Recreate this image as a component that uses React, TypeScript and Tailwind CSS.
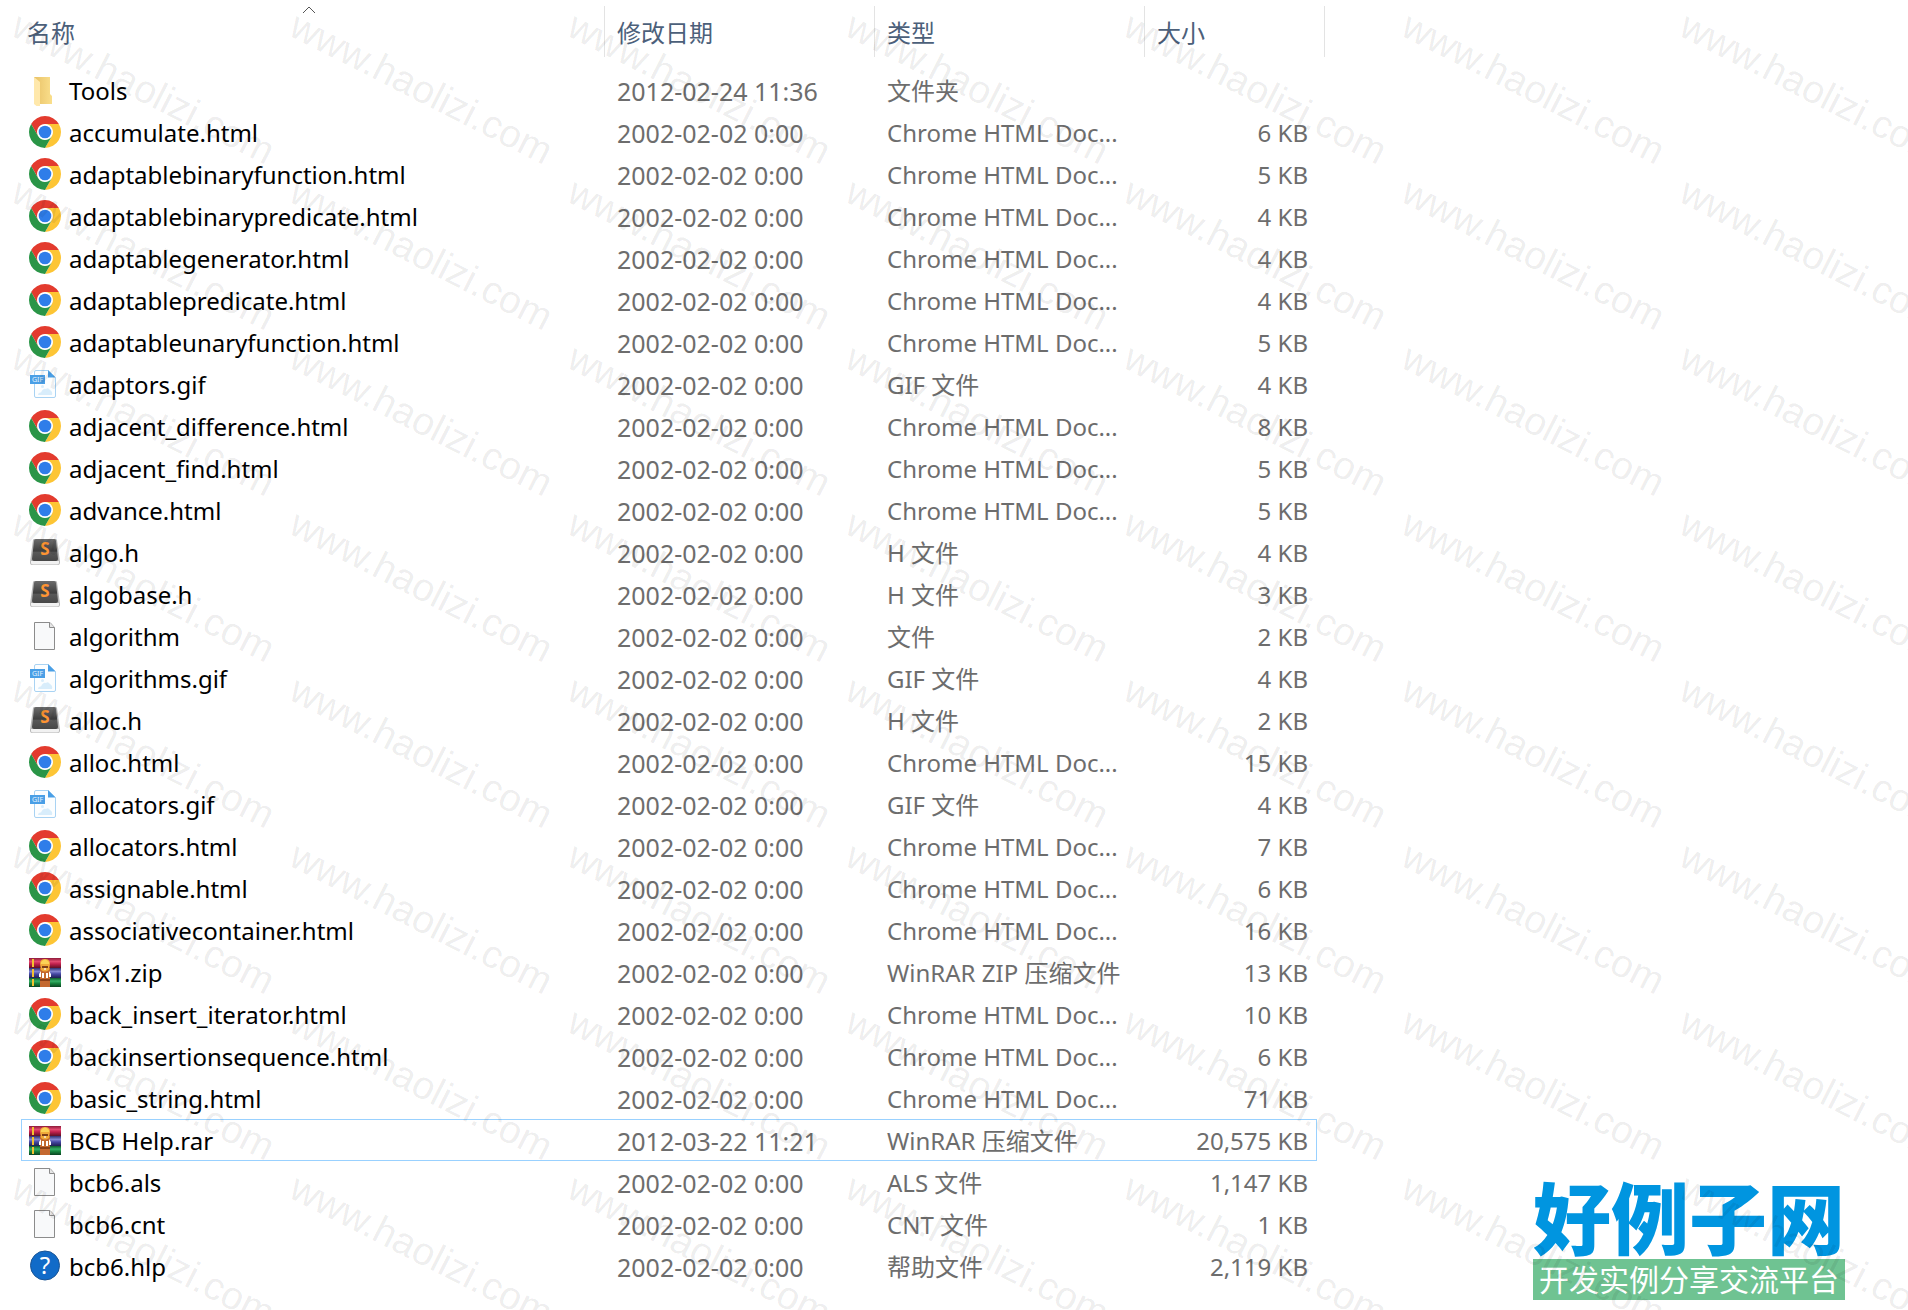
import React from "react";

type Kind = "folder" | "chrome" | "gif" | "sublime" | "blank" | "rar" | "help";
type FileRow = { name: string; date: string; type: string; size: string; kind: Kind; focused?: boolean };

const D = "2002-02-02 0:00";
const html = (name: string, kb: string): FileRow => ({ name, date: D, type: "Chrome HTML Doc...", size: kb + " KB", kind: "chrome" });
const gif = (name: string): FileRow => ({ name, date: D, type: "GIF 文件", size: "4 KB", kind: "gif" });
const header = (name: string, kb: string): FileRow => ({ name, date: D, type: "H 文件", size: kb + " KB", kind: "sublime" });

const files: FileRow[] = [
  { name: "Tools", date: "2012-02-24 11:36", type: "文件夹", size: "", kind: "folder" },
  html("accumulate.html", "6"),
  html("adaptablebinaryfunction.html", "5"),
  html("adaptablebinarypredicate.html", "4"),
  html("adaptablegenerator.html", "4"),
  html("adaptablepredicate.html", "4"),
  html("adaptableunaryfunction.html", "5"),
  gif("adaptors.gif"),
  html("adjacent_difference.html", "8"),
  html("adjacent_find.html", "5"),
  html("advance.html", "5"),
  header("algo.h", "4"),
  header("algobase.h", "3"),
  { name: "algorithm", date: D, type: "文件", size: "2 KB", kind: "blank" },
  gif("algorithms.gif"),
  header("alloc.h", "2"),
  html("alloc.html", "15"),
  gif("allocators.gif"),
  html("allocators.html", "7"),
  html("assignable.html", "6"),
  html("associativecontainer.html", "16"),
  { name: "b6x1.zip", date: D, type: "WinRAR ZIP 压缩文件", size: "13 KB", kind: "rar" },
  html("back_insert_iterator.html", "10"),
  html("backinsertionsequence.html", "6"),
  html("basic_string.html", "71"),
  { name: "BCB Help.rar", date: "2012-03-22 11:21", type: "WinRAR 压缩文件", size: "20,575 KB", kind: "rar", focused: true },
  { name: "bcb6.als", date: D, type: "ALS 文件", size: "1,147 KB", kind: "blank" },
  { name: "bcb6.cnt", date: D, type: "CNT 文件", size: "1 KB", kind: "blank" },
  { name: "bcb6.hlp", date: D, type: "帮助文件", size: "2,119 KB", kind: "help" },
];

function Gradients() {
  return (
    <svg className="absolute size-0" aria-hidden="true">
      <defs>
        <linearGradient id="folder" x1="0" y1="0" x2="1" y2="0">
          <stop offset="0" stopColor="#e9c267" />
          <stop offset="1" stopColor="#fadf8c" />
        </linearGradient>
        <linearGradient id="key" x1="0" y1="0" x2="0" y2="1">
          <stop offset="0" stopColor="#6c6c6c" />
          <stop offset="0.55" stopColor="#3e3e3e" />
          <stop offset="0.6" stopColor="#585858" />
          <stop offset="1" stopColor="#474747" />
        </linearGradient>
        <linearGradient id="red" x1="0" y1="0" x2="0" y2="1">
          <stop offset="0" stopColor="#8d1a3a" />
          <stop offset="0.35" stopColor="#e2486f" />
          <stop offset="0.6" stopColor="#c01f4c" />
          <stop offset="1" stopColor="#5e1024" />
        </linearGradient>
        <linearGradient id="blue" x1="0" y1="0" x2="0" y2="1">
          <stop offset="0" stopColor="#2f3170" />
          <stop offset="0.35" stopColor="#8184cf" />
          <stop offset="0.6" stopColor="#4447a3" />
          <stop offset="1" stopColor="#1f2050" />
        </linearGradient>
        <linearGradient id="green" x1="0" y1="0" x2="0" y2="1">
          <stop offset="0" stopColor="#0f5c2c" />
          <stop offset="0.35" stopColor="#35b066" />
          <stop offset="0.6" stopColor="#17853f" />
          <stop offset="1" stopColor="#0b4220" />
        </linearGradient>
      </defs>
    </svg>
  );
}

function Icon({ kind }: { kind: Kind }) {
  const cls = "size-8 shrink-0";
  switch (kind) {
    case "folder":
      return (
        <svg className={cls} viewBox="0 0 32 32" aria-hidden="true">
          <path d="M5 3H21V20L23 22V30H5Z" fill="url(#folder)" />
          <path d="M5 3L11 8V32L10 34L5 30Z" fill="#ffe8ab" />
        </svg>
      );
    case "chrome":
      return (
        <svg className={cls} viewBox="0 0 48 48" aria-hidden="true">
          <circle cx="24" cy="24" r="12" fill="#fff" />
          <path d="M24 12H44.78A24 24 0 0 0 3.22 12L13.61 30A12 12 0 0 1 24 12Z" fill="#e33b2e" />
          <path d="M34.39 30L24 48A24 24 0 0 0 44.78 12H24A12 12 0 0 1 34.39 30Z" fill="#fdc535" />
          <path d="M13.61 30L3.22 12A24 24 0 0 0 24 48L34.39 30A12 12 0 0 1 13.61 30Z" fill="#2a9547" />
          <circle cx="24" cy="24" r="9.5" fill="#2f7de9" />
        </svg>
      );
    case "gif":
      return (
        <svg className={cls} viewBox="0 0 32 32" aria-hidden="true">
          <path d="M7 2.5H19L26.5 9.5V28Q26.5 29.500 25 29.500H7Q5.500 29.500 5.500 28V4Q5.500 2.500 7 2.500Z" fill="#fcfeff" stroke="#a9d3f3" />
          <path d="M19 2L26.500 9.500H19Z" fill="#4a9fe6" />
          <circle cx="13.500" cy="18.500" r="1.500" fill="#d8edfb" />
          <path d="M9 27Q9 24 12 24.500Q14 20 17 21Q19 19 21 22Q24 24 23 27Z" fill="#d8edfb" />
          <path d="M1 7H16V16H1Z" fill="#4a9fe6" />
          <text x="8.500" y="14" textAnchor="middle" fontSize="7" fontFamily="Noto Sans, sans-serif" fill="#e4f3ff">GIF</text>
        </svg>
      );
    case "sublime":
      return (
        <svg className={cls} viewBox="0 0 32 32" aria-hidden="true">
          <path d="M4 4Q4 3 6 3H26Q28 3 28 4L31 26Q31 29 29 29H3Q1 29 1 26Z" fill="#b5b5b5" />
          <path d="M2 25H30V27Q30 28.500 28 28.500H4Q2 28.500 2 27Z" fill="#f1f1f1" />
          <path d="M5 5Q5 3 7 3H25Q27 3 27 5L29 23Q29 25 27 25H5Q3 25 3 23Z" fill="url(#key)" />
          <text x="16" y="19" textAnchor="middle" fontSize="17" fontWeight="700" fontFamily="Noto Sans, sans-serif" fill="#ff9432">S</text>
        </svg>
      );
    case "blank":
      return (
        <svg className={cls} viewBox="0 0 32 32" aria-hidden="true">
          <path d="M5.500 2.500H21L25.500 7.500V29.500H5.500Z" fill="#f8f9fa" stroke="#8c8c8c" />
          <path d="M20.500 2.500V7.500H25.500" fill="#e6e6e6" stroke="#8c8c8c" />
        </svg>
      );
    case "rar":
      return (
        <svg className={cls} viewBox="0 0 32 32" aria-hidden="true">
          <path d="M0 2H32V12H0Z" fill="url(#red)" />
          <path d="M0 12H32V22H0Z" fill="url(#blue)" />
          <path d="M0 22H32V31H0Z" fill="url(#green)" />
          <path d="M3 3H5V11H3ZM3 13H5V21H3ZM3 23H5V30H3Z" fill="#f2c230" />
          <path d="M11 12H21V31H11Z" fill="#c4682f" />
          <path d="M11 8Q11 3 16 3Q21 3 21 8L20 14Q16 17 12 14Z" fill="#f0a93a" />
          <path d="M12 6Q16 1 20 6V8H12Z" fill="#fbd257" />
          <path d="M13 10H19V12H13Z" fill="#7d3d18" />
          <path d="M15 12H17V14H15Z" fill="#f7dcae" />
          <path d="M12 15V21H10V18ZM20 15V21H22V18ZM13 17H15V22H13ZM17 17H19V22H17Z" fill="#fff" />
          <path d="M11 23H21V25H11Z" fill="#8a3f18" />
        </svg>
      );
    case "help":
      return (
        <svg className={cls} viewBox="0 0 32 32" aria-hidden="true">
          <circle cx="16" cy="15.500" r="14.500" fill="#116bc8" stroke="#1a5596" />
          <text x="16" y="24" textAnchor="middle" fontSize="24" fontFamily="Noto Sans, sans-serif" fill="#fff">?</text>
        </svg>
      );
  }
}

const marks = Array.from({ length: 56 }, (_, i) => i);

function Watermark() {
  return (
    <div aria-hidden="true" className="pointer-events-none absolute inset-0 select-none overflow-hidden pl-6 pt-[5px]">
      <div className="grid auto-rows-[166px] grid-cols-[repeat(7,278px)]">
        {marks.map((i) => (
          <span key={i} className="origin-top-left rotate-[27deg] whitespace-nowrap font-['Liberation_Sans'] text-[39px] leading-10 text-black/8">
            www.haolizi.com
          </span>
        ))}
      </div>
    </div>
  );
}

const headCell = "border-r border-[#e3e3e3] p-0 text-left font-normal";
const headButton = "flex h-[51px] w-full items-center pt-0.5 text-[#4c607a]";

export default function App() {
  return (
    <main className="relative min-h-screen overflow-hidden bg-white pl-[21px] pt-1.5 font-['Noto_Sans','Noto_Sans_CJK_SC',sans-serif] text-2xl text-[#6d6d6d]">
      <Gradients />
      <table className="table-fixed border-separate border-spacing-0">
        <colgroup>
          <col className="w-[584px]" />
          <col className="w-[270px]" />
          <col className="w-[270px]" />
          <col className="w-[172px]" />
          <col className="w-2" />
        </colgroup>
        <thead>
          <tr>
            <th scope="col" aria-sort="ascending" className={headCell}>
              <button type="button" className={headButton + " relative pl-1.5"}>
                名称
                <svg className="absolute left-1/2 top-0 h-2 w-4 -translate-x-3" viewBox="0 0 16 8" aria-hidden="true">
                  <path d="M2 7L8 1L14 7" fill="none" stroke="#555" />
                </svg>
              </button>
            </th>
            <th scope="col" className={headCell}><button type="button" className={headButton + " pl-3"}>修改日期</button></th>
            <th scope="col" className={headCell}><button type="button" className={headButton + " pl-3"}>类型</button></th>
            <th scope="col" colSpan={2} className={headCell}><button type="button" className={headButton + " pl-3"}>大小</button></th>
          </tr>
        </thead>
        <tbody className="before:block before:h-3">
          {files.map((f) => {
            const line = f.focused ? "border-[#99d1ff]" : "border-transparent";
            return (
              <tr key={f.name} className="h-[42px] whitespace-nowrap leading-[38px]">
                <td className={"border-y border-l p-0 " + line}>
                  <div className="flex items-center gap-2 pl-[7px] text-black">
                    <Icon kind={f.kind} />
                    <span className="pt-0.5">{f.name}</span>
                  </div>
                </td>
                <td className={"border-y p-0 pl-3 pt-0.5 text-[25px] " + line}>{f.date}</td>
                <td className={"border-y p-0 pl-3 pt-0.5 " + line}>{f.type}</td>
                <td className={"border-y border-r p-0 pr-2 pt-0.5 text-right " + line}>{f.size}</td>
              </tr>
            );
          })}
        </tbody>
      </table>

      <aside className="absolute bottom-[10px] right-[63px] text-center font-['Noto_Sans_CJK_SC',sans-serif]">
        <p className="pb-1 text-[78px] font-black leading-20 text-[#0095e0]">好例子网</p>
        <p className="bg-[#6fc392] pb-0.5 text-3xl leading-[39px] text-white">开发实例分享交流平台</p>
      </aside>

      <Watermark />
    </main>
  );
}
